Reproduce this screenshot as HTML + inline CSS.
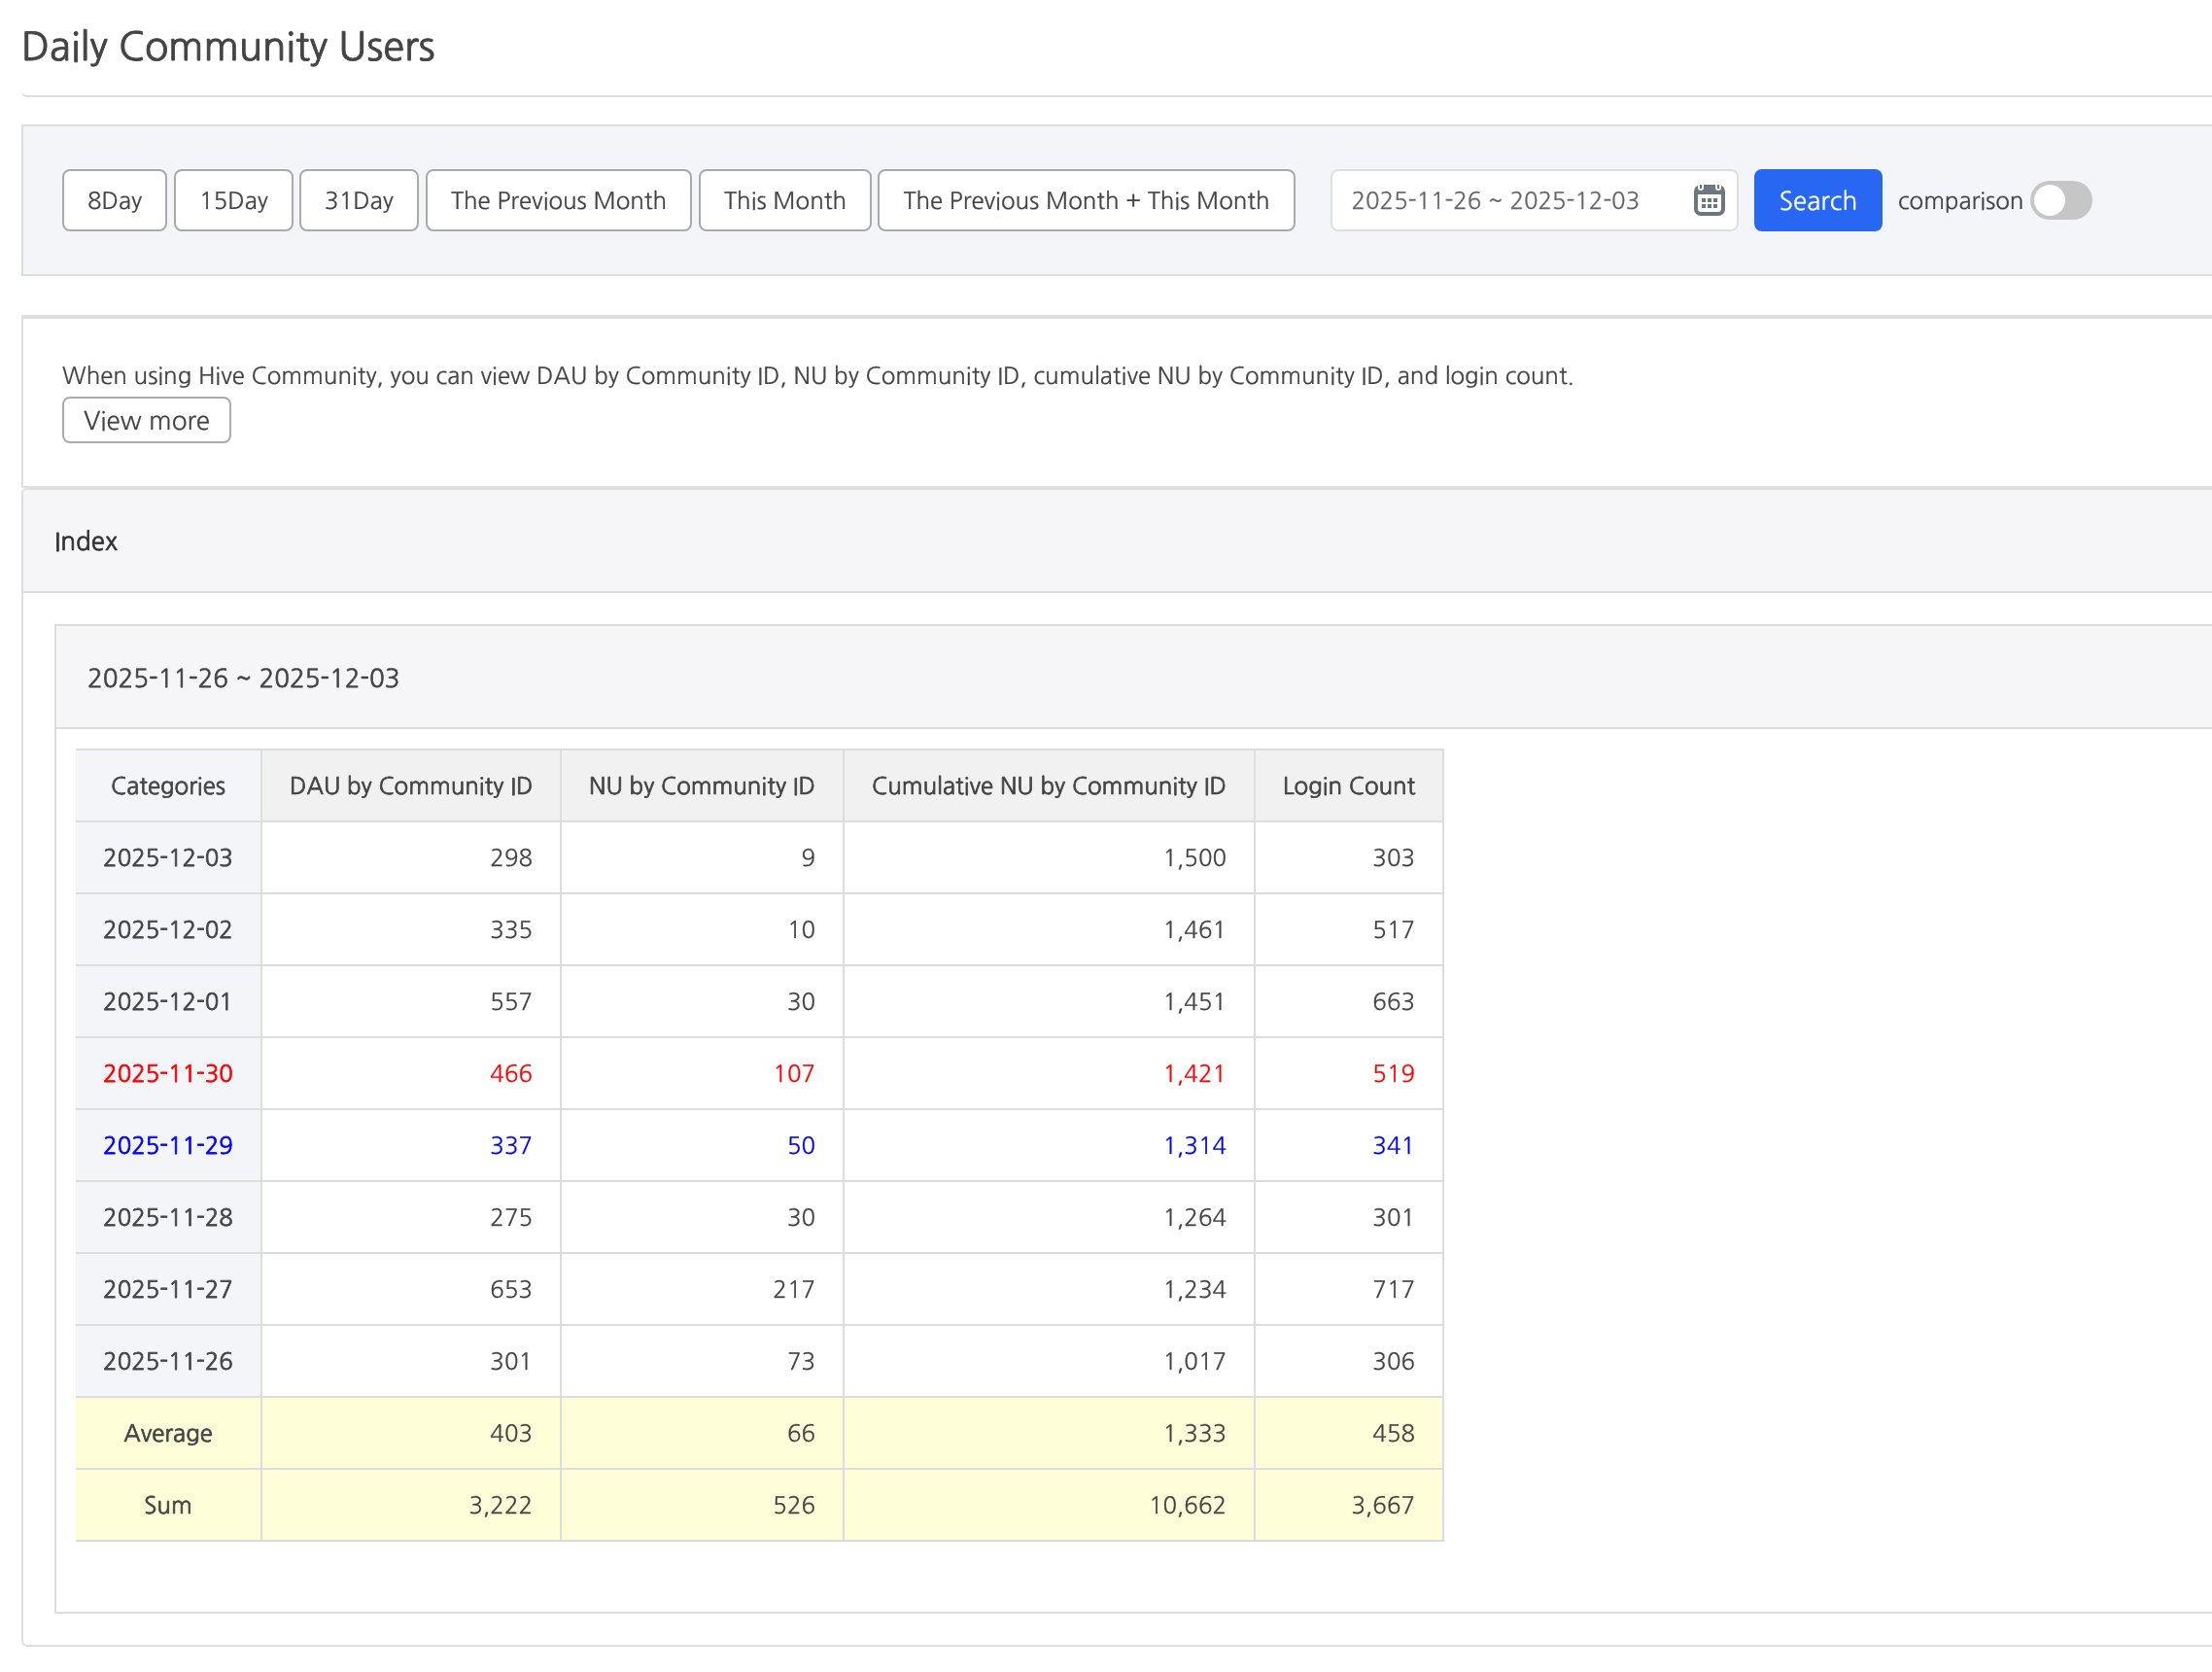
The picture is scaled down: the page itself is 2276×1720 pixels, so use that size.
<!DOCTYPE html>
<html lang="en">
<head>
<meta charset="utf-8">
<title>Daily Community Users</title>
<style>
*{box-sizing:border-box;margin:0;padding:0}
html,body{width:2276px;height:1720px;overflow:hidden;background:#fff}
body{position:relative;-webkit-text-stroke:.25px;text-rendering:geometricPrecision;-webkit-font-smoothing:antialiased;font-family:"NanumGothic","Liberation Sans","Noto Sans CJK KR",sans-serif;font-size:24px;color:#444;line-height:1}
#w{position:absolute;left:0;top:0;width:2276px;height:1720px;overflow:hidden;will-change:transform}
.abs{position:absolute}
.title{left:22px;top:28px;font-size:40px;line-height:40px;color:#444;white-space:nowrap;-webkit-text-stroke:.9px #444}
.hline{left:22px;top:0;width:2400px;height:100px;border-bottom:2px solid #ddd;border-radius:0 0 0 6px}
.filter{left:22px;top:128px;width:2400px;height:156px;background:#f4f5f9;border:2px solid #ddd}
.btn{position:absolute;top:174px;height:64px;border:2px solid #aaa;border-radius:8px;background:#fff;color:#444;font-size:24px;line-height:62px;text-align:center;white-space:nowrap}
.date{left:1369px;top:174px;width:420px;height:64px;border:2px solid #dfdfdf;border-radius:8px;background:#fff;color:#666;font-size:24px;line-height:62px;padding-left:19.500px;white-space:nowrap}
.search{left:1805px;top:174px;width:132px;height:64px;border-radius:8px;background:#2767f1;color:#fff;font-size:26px;line-height:66px;text-align:center}
.cmp{left:1953px;top:174px;height:64px;line-height:66px;font-size:24px;color:#444;white-space:nowrap}
.tog{left:2089px;top:186px;width:64px;height:40px;border-radius:20px;background:#c6c6c6}
.tog i{position:absolute;left:4px;top:4px;width:32px;height:32px;border-radius:50%;background:#fff}
.card2{left:22px;top:324px;width:2400px;height:178px;border-top:4px solid #e0e0e0;border-left:2px solid #ddd;border-bottom:2px solid #e0e0e0}
.desc{left:64px;top:372px;line-height:30px;white-space:nowrap}
.more{left:64px;top:408px;width:174px;height:48px;border:2px solid #aaa;border-radius:8px;background:#fff;font-size:26px;line-height:46px;text-align:center}
.card3{left:22px;top:502px;width:2400px;height:1192px;border:2px solid #ddd;border-top-color:#e0e0e0;border-radius:5px 0 0 6px}
.c3head{left:24px;top:504px;width:2400px;height:106px;background:#f6f6f8;border-bottom:2px solid #ddd;border-radius:3px 0 0 0}
.index{left:56px;top:541px;font-size:26px;line-height:32px;color:#333;-webkit-text-stroke:.7px #333}
.inner{left:56px;top:642px;width:2400px;height:1018px;border:2px solid #ddd}
.inhead{left:58px;top:644px;width:2400px;height:106px;background:#f6f6f8;border-bottom:2px solid #ddd}
.range{left:90px;top:681.500px;font-size:26px;line-height:32px;color:#444;white-space:nowrap;-webkit-text-stroke:.6px #444}
table{position:absolute;left:78px;top:770px;border-collapse:separate;border-spacing:0;table-layout:fixed;width:1408px}
th,td{height:74px;border-right:2px solid #ddd;border-bottom:2px solid #ddd;font-size:24px;line-height:30px;padding:1px 28px 0;font-weight:400;white-space:nowrap;vertical-align:middle}
th{height:76px;padding-top:1.500px;border-top:2px solid #ddd;background:#f1f1f1;text-align:center;-webkit-text-stroke:.7px #444}
td{text-align:right;background:#fff}
th:first-child,td:first-child{background:#f4f5f9;text-align:center;padding:1px 0 0;-webkit-text-stroke:.7px currentColor}
tr.sun td{color:#f00}
tr.sat td{color:#00f}
tr.sum td{background:#fdfdd8}
tr.sum td:first-child{background:#fdfdd8}
</style>
</head>
<body>
<div id="w">
<div class="abs hline"></div>
<div class="abs title">Daily Community Users</div>

<div class="abs filter"></div>
<div class="btn" style="left:64px;width:108px">8Day</div>
<div class="btn" style="left:179px;width:123px">15Day</div>
<div class="btn" style="left:308px;width:123px">31Day</div>
<div class="btn" style="left:438px;width:274px">The Previous Month</div>
<div class="btn" style="left:719px;width:178px">This Month</div>
<div class="btn" style="left:903px;width:430px">The Previous Month + This Month</div>
<div class="abs date">2025-11-26 ~ 2025-12-03</div>
<svg class="abs" style="left:1743px;top:190px" width="32" height="32" viewBox="0 0 32 32">
  <path fill="#6c7881" fill-rule="evenodd" d="M7 0h18a7 7 0 0 1 7 7v18a7 7 0 0 1-7 7H7a7 7 0 0 1-7-7V7a7 7 0 0 1 7-7zM4 10v14.5A3.5 3.5 0 0 0 7.500 28h17a3.500 3.500 0 0 0 3.500-3.500V10z"/>
  <rect x="4" y="-2" width="6" height="8" rx="3" fill="#fff"/>
  <rect x="22" y="-2" width="6" height="8" rx="3" fill="#fff"/>
  <rect x="6" y="0" width="2" height="4" fill="#6c7881"/>
  <rect x="24" y="0" width="2" height="4" fill="#6c7881"/>
  <g fill="#6c7881"><rect x="8" y="14" width="4" height="4"/><rect x="14" y="14" width="4" height="4"/><rect x="20" y="14" width="4" height="4"/><rect x="8" y="20" width="4" height="4"/><rect x="14" y="20" width="4" height="4"/><rect x="20" y="20" width="4" height="4"/></g>
</svg>
<div class="abs search">Search</div>
<div class="abs cmp">comparison</div>
<div class="abs tog"><i></i></div>

<div class="abs card2"></div>
<div class="abs desc">When using Hive Community, you can view DAU by Community ID, NU by Community ID, cumulative NU by Community ID, and login count.</div>
<div class="abs more">View more</div>

<div class="abs card3"></div>
<div class="abs c3head"></div>
<div class="abs index">Index</div>
<div class="abs inner"></div>
<div class="abs inhead"></div>
<div class="abs range">2025-11-26 ~ 2025-12-03</div>

<table>
<colgroup><col style="width:192px"><col style="width:308px"><col style="width:291px"><col style="width:423px"><col style="width:194px"></colgroup>
<thead><tr><th>Categories</th><th>DAU by Community ID</th><th>NU by Community ID</th><th>Cumulative NU by Community ID</th><th>Login Count</th></tr></thead>
<tbody>
<tr><td>2025-12-03</td><td>298</td><td>9</td><td>1,500</td><td>303</td></tr>
<tr><td>2025-12-02</td><td>335</td><td>10</td><td>1,461</td><td>517</td></tr>
<tr><td>2025-12-01</td><td>557</td><td>30</td><td>1,451</td><td>663</td></tr>
<tr class="sun"><td>2025-11-30</td><td>466</td><td>107</td><td>1,421</td><td>519</td></tr>
<tr class="sat"><td>2025-11-29</td><td>337</td><td>50</td><td>1,314</td><td>341</td></tr>
<tr><td>2025-11-28</td><td>275</td><td>30</td><td>1,264</td><td>301</td></tr>
<tr><td>2025-11-27</td><td>653</td><td>217</td><td>1,234</td><td>717</td></tr>
<tr><td>2025-11-26</td><td>301</td><td>73</td><td>1,017</td><td>306</td></tr>
<tr class="sum"><td>Average</td><td>403</td><td>66</td><td>1,333</td><td>458</td></tr>
<tr class="sum"><td>Sum</td><td>3,222</td><td>526</td><td>10,662</td><td>3,667</td></tr>
</tbody>
</table>
</div>
</body>
</html>
